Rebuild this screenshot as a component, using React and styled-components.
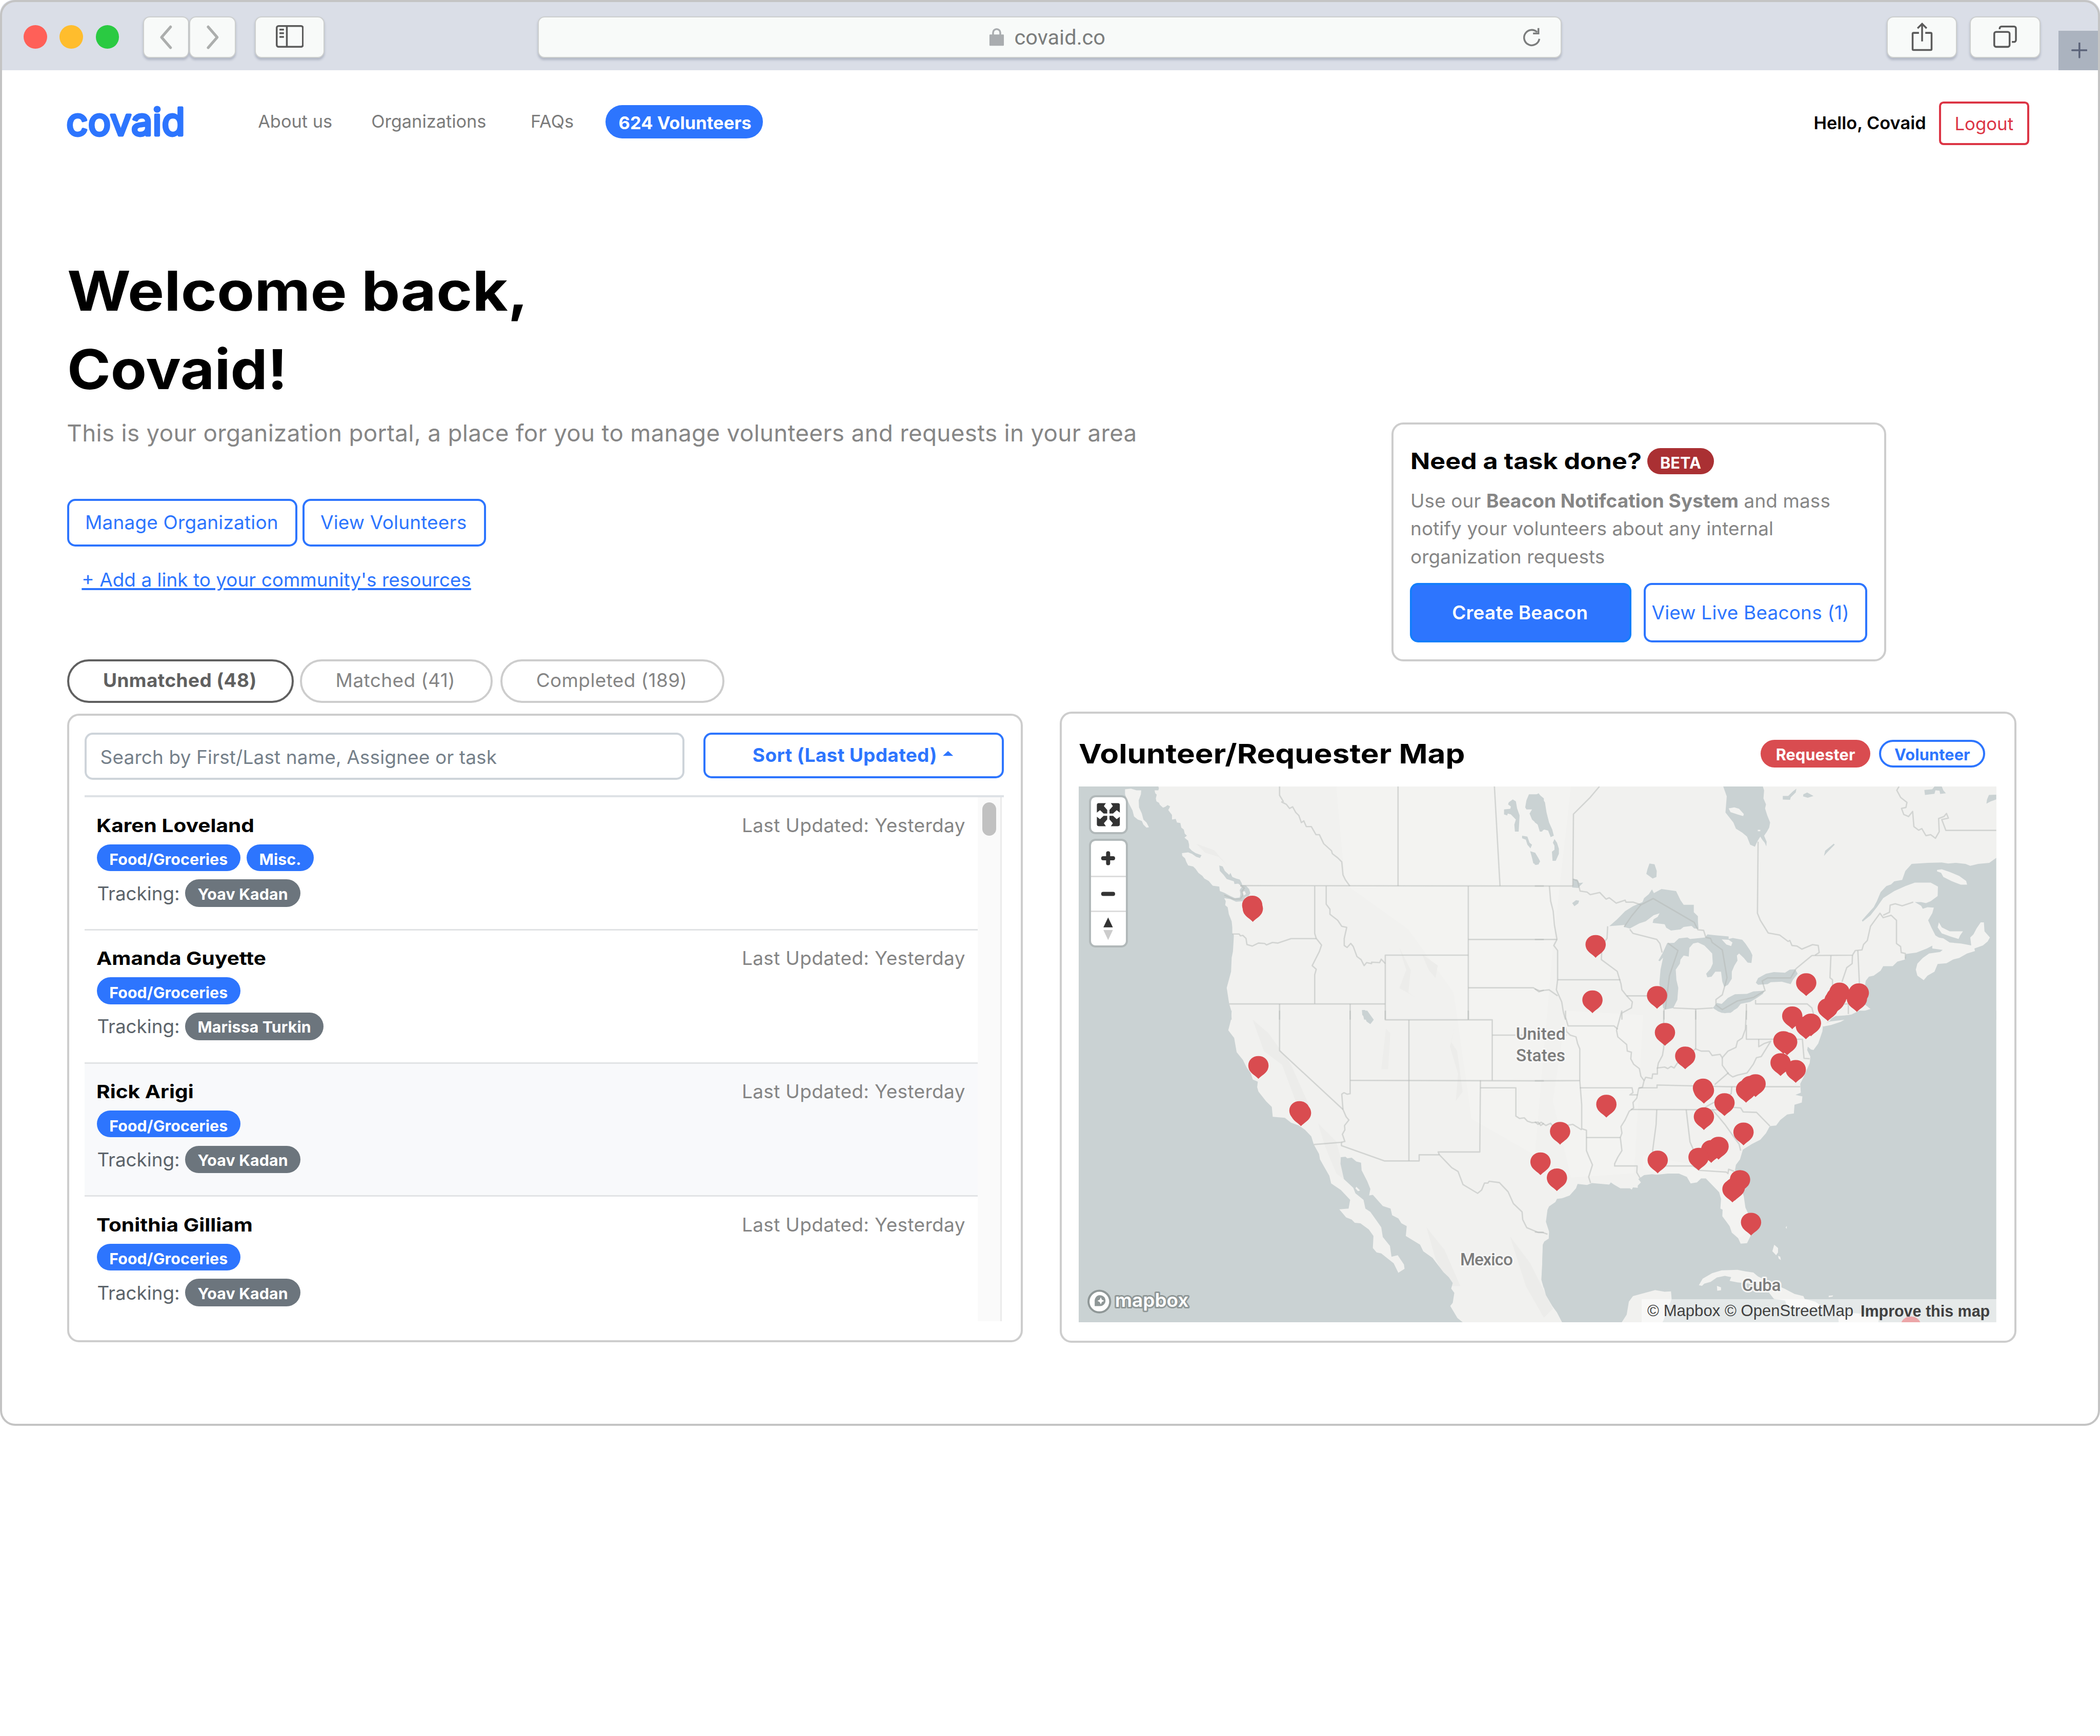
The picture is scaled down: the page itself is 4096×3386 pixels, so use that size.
import React from "react";
import styled, { createGlobalStyle, css } from "styled-components";

/* 1rem is one 46.52th of the window width, so the page scales with it. */
const GlobalStyle = createGlobalStyle`
  html { font-size: calc(100vw / 46.52); }
  body { margin: 0; background: #fff; font-family: Inter, "Liberation Sans", sans-serif; color: #000; overflow: hidden; }
  *, *::before, *::after { box-sizing: border-box; }
  h1, h2, h3, p { margin: 0; }
  button { font-family: inherit; margin: 0; padding: 0; background: none; border: 0; white-space: nowrap; }
`;

const BLUE = "#2d75fe";
const LINE = "#cdcdcd";

/* ---------- window ---------- */
const Window = styled.div`
  position: relative;
  height: 31.58rem;
  border-radius: 0.3rem;
  overflow: hidden;
  display: flex;
  flex-direction: column;
  &::after {
    content: "";
    position: absolute;
    inset: 0;
    border: 4px solid #c4c4c4;
    border-radius: 0.34rem;
    pointer-events: none;
  }
`;

const Toolbar = styled.div`
  flex: none;
  height: 1.56rem;
  padding: 0.36rem 0.04rem 0 0.52rem;
  background: #dadee7;
  display: flex;
  align-items: flex-start;
`;

const Lights = styled.div`
  display: flex;
  gap: 0.28rem;
  margin-top: 0.2rem;
`;
const Light = styled.span`
  width: 0.52rem;
  height: 0.52rem;
  border-radius: 50%;
  background: ${(p) => p.$color};
`;

const ToolButton = styled.button`
  flex: none;
  width: ${(p) => p.$width}rem;
  height: 0.92rem;
  margin-left: ${(p) => p.$before || 0}rem;
  border: 2px solid #cdcfce;
  border-radius: 0.15rem;
  background: #f8faf9;
  box-shadow: 0 0.04rem 0.05rem rgba(90, 100, 125, 0.32);
  display: flex;
  align-items: center;
  justify-content: center;
`;

const AddressBar = styled(ToolButton)`
  justify-content: flex-start;
  padding: 0 0.44rem 0 9.98rem;
`;
const Address = styled.span`
  font-family: Roboto, sans-serif;
  font-size: 0.472rem;
  color: #7b7d7d;
  margin: 0.01rem auto 0 0.22rem;
`;

const NewTab = styled.button`
  flex: none;
  width: 0.88rem;
  height: 0.88rem;
  margin: 0.32rem 0 0 0.4rem;
  padding-left: 0.04rem;
  background: #abb3bf;
  display: flex;
  align-items: center;
  justify-content: center;
`;

/* ---------- site header ---------- */
const Header = styled.header`
  flex: none;
  height: 2.44rem;
  padding: 0.69rem 1.57rem 0 1.5rem;
  display: flex;
  align-items: flex-start;
`;
const Logo = styled.svg`
  display: block;
  width: 2.6rem;
  height: 0.8rem;
  margin-top: 0.05rem;
  overflow: visible;
`;
const Nav = styled.nav`
  display: flex;
  align-items: flex-start;
  margin-left: 1.615rem;
`;
const NavLink = styled.a`
  width: ${(p) => p.$width}rem;
  margin-top: 0.195rem;
  font-size: 0.39rem;
  line-height: 0.5rem;
  color: #7b7b7b;
`;
const VolunteerCount = styled.span`
  width: 3.49rem;
  height: 0.737rem;
  margin-top: 0.08rem;
  padding: 0.05rem 0 0 0.03rem;
  border-radius: 0.37rem;
  background: ${BLUE};
  color: #fff;
  font-size: 0.392rem;
  font-weight: 700;
  display: flex;
  align-items: center;
  justify-content: center;
`;
const Account = styled.div`
  margin-left: auto;
  display: flex;
  align-items: flex-start;
`;
const Greeting = styled.span`
  margin-top: 0.225rem;
  font-size: 0.39rem;
  line-height: 0.5rem;
  font-weight: 600;
  margin-right: 0.285rem;
`;
const Logout = styled.button`
  width: 2rem;
  height: 0.967rem;
  border: 4px solid #dc3545;
  border-radius: 0.1rem;
  color: #dc3545;
  font-size: 0.395rem;
`;

/* ---------- page body ---------- */
const Main = styled.main`
  display: flex;
  gap: 0.82rem;
  padding-left: 1.49rem;
`;
const PortalColumn = styled.section`
  width: 21.166rem;
  padding-top: 1.58rem;
`;
const MapColumn = styled.section`
  width: 21.196rem;
  padding-top: 5.364rem;
`;

/* Headings are set wide: the letters are extended horizontally. */
const Wide = styled.span`
  display: ${(p) => (p.$line ? "block" : "inline-block")};
  transform: scaleX(${(p) => p.$stretch || 1.14});
  transform-origin: 0 50%;
  white-space: nowrap;
`;

const Welcome = styled.h1`
  font-size: 1.22rem;
  line-height: 1.74rem;
  font-weight: 700;
`;
const Intro = styled.p`
  margin-top: 0.214rem;
  margin-left: -0.01rem;
  font-size: 0.52rem;
  line-height: 0.64rem;
  letter-spacing: 0.0034rem;
  color: #868686;
  white-space: nowrap;
`;

const Actions = styled.div`
  display: flex;
  gap: 0.114rem;
  margin-top: 1.136rem;
`;
const OutlineButton = styled.button`
  width: ${(p) => p.$width}rem;
  height: ${(p) => p.$height || 1.055}rem;
  border: 4px solid ${BLUE};
  border-radius: 0.18rem;
  color: ${BLUE};
  font-size: 0.42rem;
  letter-spacing: 0.002rem;
  font-weight: ${(p) => (p.$bold ? 700 : 400)};
  padding: 0 ${(p) => p.$shift || 0.03}rem 0.015rem 0;
  display: flex;
  align-items: center;
  justify-content: center;
`;
const FilledButton = styled(OutlineButton)`
  background: ${BLUE};
  border-color: #147efb;
  color: #fff;
  font-weight: 600;
`;
const ResourceLink = styled.a`
  display: block;
  margin: 0.482rem 0 0 0.32rem;
  font-size: 0.42rem;
  line-height: 0.52rem;
  color: ${BLUE};
  text-decoration: underline;
  text-decoration-thickness: 3.5px;
  text-underline-offset: 0.035rem;
`;

const Tabs = styled.div`
  display: flex;
  margin-top: 1.505rem;
`;
const Tab = styled.button`
  width: ${(p) => p.$width}rem;
  height: 0.96rem;
  margin-right: ${(p) => p.$after || 0}rem;
  padding: 0 0.03rem 0.04rem 0;
  border-radius: 0.48rem;
  border: 4px solid ${(p) => (p.$active ? "#606060" : LINE)};
  color: ${(p) => (p.$active ? "#606060" : "#858585")};
  font-size: 0.42rem;
  letter-spacing: 0.0045rem;
  font-weight: ${(p) => (p.$active ? 700 : 400)};
`;

const Card = styled.div`
  border: 4px solid ${LINE};
  border-radius: 0.26rem;
  background: #fff;
`;

/* ---------- request list ---------- */
const ListCard = styled(Card)`
  height: 13.93rem;
  margin-top: 0.234rem;
  padding: 0.383rem 0.37rem 0 0.341rem;
  overflow: hidden;
`;
const Filters = styled.div`
  display: flex;
  gap: 0.425rem;
  height: 1.037rem;
`;
const Search = styled.div`
  width: 13.285rem;
  height: 1.037rem;
  padding: 0.035rem 0 0 0.3rem;
  border: 4px solid #ced4da;
  border-radius: 0.18rem;
  font-size: 0.42rem;
  letter-spacing: 0.0015rem;
  color: #75808a;
  display: flex;
  align-items: center;
`;
const SortButton = styled(OutlineButton)`
  gap: 0.13rem;
  letter-spacing: 0.004rem;
  padding-bottom: 0.03rem;
`;
const ListArea = styled.div`
  margin-top: 0.348rem;
  height: 11.655rem;
  width: 20.357rem;
  border-top: 4px solid #dee2e6;
  display: flex;
  overflow: hidden;
`;
const Rows = styled.div`
  width: 19.777rem;
`;
const Row = styled.div`
  height: 2.95rem;
  padding: 0.367rem 0.27rem 0 0.27rem;
  border-bottom: 3px solid #e1e3e5;
  background: ${(p) => (p.$hovered ? "#f8f9fb" : "#fff")};
`;
const RowHead = styled.div`
  display: flex;
  justify-content: space-between;
  line-height: 0.5rem;
`;
const Person = styled(Wide)`
  font-size: 0.405rem;
  font-weight: 700;
  margin-left: -0.01rem;
`;
const Updated = styled.span`
  font-size: 0.42rem;
  letter-spacing: 0.004rem;
  color: #858585;
`;
const Tags = styled.div`
  display: flex;
  gap: 0.145rem;
  margin-top: 0.17rem;
`;
const Tag = styled.span`
  height: ${(p) => (p.$muted ? 0.61 : 0.595)}rem;
  padding: ${(p) => (p.$muted ? 0.035 : 0.08)}rem 0.275rem 0 0.275rem;
  border-radius: 0.31rem;
  background: ${(p) => (p.$muted ? "#6c757d" : BLUE)};
  color: #fff;
  font-size: 0.345rem;
  letter-spacing: 0.001rem;
  font-weight: 700;
  display: flex;
  align-items: center;
`;
const Tracking = styled.div`
  display: flex;
  align-items: center;
  gap: 0.12rem;
  height: 0.62rem;
  margin: 0.18rem 0 0 0.005rem;
  font-size: 0.418rem;
  color: #5c646b;
`;
const ScrollTrack = styled.div`
  width: 0.54rem;
  background: #fafafa;
  border-right: 3px solid #ebebeb;
  padding: 0.11rem 0 0 0.11rem;
`;
const ScrollThumb = styled.div`
  width: 0.31rem;
  height: 0.74rem;
  border-radius: 0.155rem;
  background: #c1c1c1;
`;

/* ---------- beacon card ---------- */
const BeaconCard = styled(Card)`
  width: 10.96rem;
  height: 5.286rem;
  margin-left: 7.344rem;
  padding: 0.52rem 0 0 0.369rem;
`;
const BeaconTitle = styled.h3`
  display: flex;
  height: 0.58rem;
  margin-left: 0.01rem;
  font-size: 0.5rem;
  line-height: 0.58rem;
  font-weight: 700;
`;
const BeaconName = styled.span`
  width: 5.25rem;
`;
const Beta = styled.span`
  width: 1.47rem;
  height: 0.58rem;
  padding-top: 0.08rem;
  border-radius: 0.29rem;
  background: #aa3033;
  color: #fff;
  font-size: 0.35rem;
  font-weight: 700;
  line-height: 0.5rem;
  text-align: center;
`;
const BeaconText = styled.p`
  margin: 0.279rem 0 0 0.01rem;
  font-size: 0.42rem;
  line-height: 0.62rem;
  letter-spacing: 0.0008rem;
  color: #868686;
  white-space: nowrap;
`;
const BeaconActions = styled.div`
  display: flex;
  gap: 0.275rem;
  margin-top: 0.264rem;
`;

/* ---------- map card ---------- */
const MapCard = styled(Card)`
  height: 13.976rem;
  margin-top: 1.115rem;
  padding: 0.542rem 0 0 0.375rem;
`;
const MapHead = styled.div`
  display: flex;
  width: 20.324rem;
  height: 0.7rem;
  padding-right: 0.24rem;
`;
const MapTitle = styled.h2`
  font-size: 0.6rem;
  line-height: 0.7rem;
  font-weight: 700;
`;
const Legend = styled.div`
  margin: 0.033rem 0 0 auto;
  display: flex;
  gap: 0.194rem;
`;
const LegendPill = styled.span`
  width: ${(p) => p.$width}rem;
  height: 0.615rem;
  padding-top: 0.05rem;
  border-radius: 0.31rem;
  font-size: 0.348rem;
  letter-spacing: 0.002rem;
  font-weight: 700;
  display: flex;
  align-items: center;
  justify-content: center;
  ${(p) =>
    p.$filled
      ? css`background: #d94c50; color: #fff;`
      : css`border: 4px solid ${BLUE}; color: ${BLUE};`}
`;
const MapFrame = styled.div`
  position: relative;
  width: 20.324rem;
  height: 11.862rem;
  margin-top: 0.373rem;
  overflow: hidden;
  background: #f1f1ef;
`;
const MapDrawing = styled.svg`
  display: block;
  width: 100%;
  height: 100%;
`;
const MapControls = styled.div`
  position: absolute;
  top: 0.232rem;
  left: 0.269rem;
  display: flex;
  flex-direction: column;
  gap: 0.196rem;
`;
const ControlGroup = styled.div`
  width: 0.778rem;
  border-radius: 0.1rem;
  background: #fff;
  box-shadow: 0 0 0 0.045rem rgba(0, 0, 0, 0.12);
`;
const Control = styled.button`
  display: flex;
  align-items: center;
  justify-content: center;
  width: 100%;
  height: 0.772rem;
  & + & { border-top: 3px solid #ddd; }
`;
const ControlGlyph = styled.svg`
  display: block;
  flex: none;
  width: 0.778rem;
  height: 0.772rem;
`;
const Attribution = styled.div`
  position: absolute;
  right: 0;
  bottom: 0;
  height: 0.51rem;
  padding: 0.02rem 0.14rem 0 0.125rem;
  background: rgba(255, 255, 255, 0.5);
  font-family: "Liberation Sans", Arial, sans-serif;
  font-size: 0.353rem;
  color: #404040;
  display: flex;
  align-items: center;
  gap: 0.1rem;
`;
const Improve = styled.b`
  margin-left: 0.06rem;
  font-size: 0.346rem;
`;

/* ---------- icons ---------- */
const IconBox = styled.svg`
  display: block;
  flex: none;
  width: ${(p) => p.$w / 100}rem;
  height: ${(p) => p.$h / 100}rem;
`;
const Icon = ({ w, h, children, stroke = "#5a5a5a", sw = 4 }) => (
  <IconBox $w={w} $h={h} viewBox={`0 0 ${w} ${h}`} fill="none" stroke={stroke} strokeWidth={sw}>
    {children}
  </IconBox>
);

const BackIcon = () => (
  <Icon w={36} h={56} stroke="#acaead" sw={6}>
    <path d="M28 5 8 28 28 51" strokeLinecap="round" strokeLinejoin="round" />
  </Icon>
);
const ForwardIcon = () => (
  <Icon w={36} h={56} stroke="#acaead" sw={6}>
    <path d="M8 5 28 28 8 51" strokeLinecap="round" strokeLinejoin="round" />
  </Icon>
);
const SidebarIcon = () => (
  <Icon w={62} h={52}>
    <rect x="2" y="2" width="58" height="46" rx="4" />
    <path d="M24.400 2v46M8 10h10M8 18h10M8 26h10" />
  </Icon>
);
const LockIcon = () => (
  <Icon w={34} h={40} stroke="#a9acaf">
    <path d="M9 15V10a8 8 0 0 1 16 0v5" />
    <rect x="1" y="14" width="32" height="25" rx="1.500" fill="#a9acaf" stroke="none" />
  </Icon>
);
const ReloadIcon = () => (
  <Icon w={42} h={46} stroke="#7b7d7d">
    <path d="M38 27A17 17 0 1 1 33 12M36 3V15H24" />
  </Icon>
);
const ShareIcon = () => (
  <Icon w={50} h={66}>
    <path d="M18 24H6a2 2 0 0 0-2 2V60a2 2 0 0 0 2 2H44a2 2 0 0 0 2-2V26a2 2 0 0 0-2-2H32" />
    <path d="M25 43V4M15 14 25 4 35 14" />
  </Icon>
);
const CopiesIcon = () => (
  <Icon w={52} h={50}>
    <rect x="2" y="14" width="34" height="33" rx="4" />
    <path d="M14 8V6a4 4 0 0 1 4-4H46a4 4 0 0 1 4 4V32a4 4 0 0 1-4 4H41" />
  </Icon>
);
const PlusIcon = () => (
  <Icon w={36} h={36} stroke="#5b6379">
    <path d="M2 17H34M18 1V33" strokeLinecap="round" />
  </Icon>
);
const CaretIcon = () => (
  <Icon w={23} h={24} stroke="none">
    <path d="M0 14 11.500 3 23 14Z" fill={BLUE} />
  </Icon>
);

/* ---------- map data ---------- */
const water = {
  nw: [
    "72,411 328,411 330,420 328,430 316,430 318,444 323,452 320,470 322,485 330,492 333,502 343,516 350,512 358,503 366,510 360,528 366,540 372,552 372,575 384,572 388,590 399,592 402,615 410,625 413,645 420,655 412,665 424,680 427,700 427,715 436,730 448,742 467,752 462,766 450,760 436,745 424,738 404,742 405,755 414,768 418,785 424,803 440,808 448,820 457,840 470,855 476,868 490,880 503,903 524,908 526,930 540,938 560,955 575,965 590,962 592,945 590,925 597,908 585,893 573,895 571,882 548,870 538,850 526,830 524,803 535,808 542,830 556,850 560,840 566,860 578,868 590,873 596,890 598,900 610,903 620,920 624,940 618,955 608,960 600,980 578,983 560,970 540,965 545,980 543,1000 551,1010 555,1045 564,1080 566,1110 566,1140 571,1148 570,1180 568,1230 564,1260 562,1330 555,1370 548,1410 552,1450 556,1490 562,1520 564,1568 72,1568",
    "1455,490 1468,475 1478,485 1482,520 1490,555 1487,635 1475,635 1473,600 1478,575 1462,550 1452,545 1450,555 1440,550 1440,525 1460,522 1462,510 1453,500",
    "1508,515 1512,480 1520,450 1552,450 1568,470 1568,620 1562,635 1555,635 1548,600 1530,575 1522,545 1530,525 1512,525",
    "1498,655 1515,660 1522,690 1530,700 1525,718 1515,700 1510,675 1498,668",
    "1524,732 1540,740 1550,765 1556,785 1545,800 1534,792 1530,765",
    "983,1520 993,1520 998,1540 1010,1550 1020,1568 990,1568",
  ],
  ne: [
    "0,455 12,445 20,462 32,490 37,540 45,590 55,625 60,655 50,662 42,630 30,625 18,635 10,600 0,590",
    "62,672 70,690 76,720 76,745 66,780 56,780 54,735 62,725 62,705 57,690",
    "0,740 8,760 16,780 12,798 0,800",
    "595,411 720,411 724,430 722,470 730,500 727,520 734,555 743,590 740,615 733,635 724,655 732,685 731,708 726,690 718,675 712,660 704,680 700,692 695,710 680,700 670,660 655,640 635,620 627,590 602,540 606,460",
    "783,458 800,458 815,435 826,422 824,440 808,465 806,477 783,476",
    "848,450 860,441 880,458 862,467 847,460",
    "1230,428 1255,425 1262,411 1285,411 1290,430 1298,445 1280,448 1278,432 1265,430 1262,447 1232,453",
    "1434,453 1457,452 1457,475 1440,485 1426,496 1428,475",
    "944,695 947,700 925,735 913,756 917,730",
    "362,793 378,797 385,830 384,860 372,868 352,845 356,820",
    "120,870 134,872 140,890 153,888 142,905 138,915 118,912 120,895",
    "118,990 130,975 140,978 137,992 125,1005",
    "340,985 345,965 360,945 370,922 376,940 400,920 446,930 460,975 470,998 502,998 502,1035 515,1055 515,1080 517,1118 503,1115 495,1103 470,1108 460,1120 430,1126 415,1112 410,1095 372,1088 375,1070 388,1058 394,1040 375,1050 350,1080 330,1090 300,1116 282,1108 284,1098 235,1104 260,1070 285,1030 310,1005",
    "418,1188 440,1187 455,1165 482,1160 490,1168 538,1160 545,1145 575,1150 612,1155 612,1168 625,1163 655,1172 665,1190 680,1225 687,1248 684,1287 672,1285 660,1262 645,1240 638,1250 640,1275 630,1300 622,1330 622,1365 610,1395 598,1405 592,1380 588,1330 570,1330 558,1355 545,1358 541,1340 555,1315 562,1290 560,1240 548,1220 535,1200 515,1185 500,1190 488,1212 486,1255 470,1250 460,1270 458,1290 445,1320 447,1370 453,1410 450,1470 437,1510 412,1518 405,1510 400,1440 393,1390 397,1320 405,1260 415,1242 395,1278 390,1275 403,1240",
    "562,1510 575,1485 590,1490 610,1460 632,1442 670,1440 690,1428 725,1424 720,1440 700,1462 680,1480 650,1490 640,1510 620,1530 600,1536 580,1528",
    "698,1385 705,1362 730,1340 755,1332 790,1335 805,1320 822,1318 830,1340 815,1370 808,1392 780,1380 745,1382 735,1392 705,1395",
    "1457,765 1435,790 1400,795 1375,805 1360,795 1330,790 1305,793 1285,788 1240,790 1190,795 1170,830 1160,875 1135,882 1125,897 1110,905 1092,935 1080,980 1070,1010 1050,1045 1033,1075 1035,1082 1060,1050 1080,1010 1100,965 1135,930 1170,905 1200,888 1250,888 1273,908 1272,955 1250,980 1235,990 1220,985 1200,985 1220,1003 1225,1018 1240,1010 1260,1012 1255,1040 1242,1075 1252,1110 1265,1150 1280,1165 1262,1195 1238,1215 1205,1235 1172,1242 1168,1270 1145,1280 1130,1303 1100,1303 1092,1325 1070,1350 1055,1355 1045,1375 1042,1405 1050,1440 1040,1490 1060,1515 1040,1525 1020,1530 1000,1545 950,1550 930,1568 1457,1568",
  ],
  sw: [
    "72,0 564,0 562,40 553,90 572,125 580,190 600,225 612,260 625,285 632,315 648,325 646,350 650,370 675,415 693,440 696,485 735,490 755,512 780,525 800,545 820,575 828,612 845,655 848,680 860,710 878,755 884,790 915,820 945,865 940,905 910,908 932,945 950,955 960,970 978,972 1005,1000 1020,1030 1018,1085 1030,1105 1045,1110 1085,1155 1100,1198 1120,1180 1118,1160 1098,1118 1078,1125 1073,1075 1050,1035 1045,990 1030,960 1010,920 994,905 988,865 962,835 955,810 925,770 914,700 915,670 930,668 936,675 950,672 965,690 980,695 982,730 1000,780 1010,815 1006,845 1018,842 1050,893 1075,905 1080,935 1100,950 1110,972 1127,985 1124,1030 1170,1070 1180,1100 1210,1130 1245,1195 1262,1218 1275,1245 1270,1270 1280,1290 1275,1335 1267,1350 1290,1405 1312,1430 72,1430",
    "1568,1060 1565,1080 1562,1180 1560,1230 1568,1270",
    "983,0 1000,0 1010,20 1021,42 1010,62 998,50 992,30 984,20",
  ],
  se: [
    "1457,0 1025,0 1000,18 960,28 935,42 910,68 908,95 895,150 880,180 872,178 862,165 860,180 870,210 868,240 850,300 838,335 840,375 823,385 845,392 843,420 820,430 818,470 797,475 775,500 762,525 742,528 730,560 712,590 685,610 657,635 648,680 635,705 632,730 645,770 660,850 665,900 673,925 680,960 683,1025 670,1063 650,1065 642,1040 622,1015 615,985 605,965 592,940 593,910 586,905 588,860 582,830 562,800 540,767 525,767 512,785 492,790 480,760 455,745 420,745 385,750 370,748 345,752 327,770 335,785 325,800 325,810 310,808 306,818 300,812 270,812 250,795 240,785 235,795 180,788 165,797 135,792 130,812 110,845 85,858 70,860 65,875 45,895 40,910 35,965 45,1010 44,1042 30,1055 25,1070 22,1230 35,1300 55,1350 70,1380 88,1430 272,1430 290,1390 297,1330 310,1305 380,1277 410,1285 430,1283 432,1318 405,1420 400,1430 1457,1430",
    "575,0 628,0 618,10 590,10",
  ],
};
const islands = {
  nw: ["221,425 240,422 258,430 273,430 272,450 265,480 266,515 275,545 280,575 290,590 298,613 290,615 280,600 275,582 262,575 250,560 245,530 235,500 226,470 221,450", "598,935 606,930 610,945 602,952"],
  ne: [
    "612,520 630,515 645,522 660,548 658,558 640,550 618,538",
    "704,626 712,626 712,633 704,633",
    "590,1170 612,1172 624,1185 620,1203 605,1195",
    "1270,825 1285,822 1310,835 1340,855 1362,880 1365,898 1345,898 1315,880 1290,860 1283,840 1270,832",
    "1276,1085 1285,1110 1310,1130 1352,1130 1343,1150 1338,1168 1312,1155 1285,1140 1272,1110",
    "1262,1180 1275,1160 1290,1165 1310,1185 1345,1190 1378,1200 1375,1160 1385,1145 1395,1115 1408,1085 1418,1085 1420,1130 1437,1160 1430,1180 1415,1200 1388,1215 1390,1228 1365,1240 1340,1262 1320,1270 1300,1288 1272,1292 1262,1330 1240,1350 1228,1372 1208,1350 1203,1320 1208,1290 1225,1262 1245,1240 1280,1232 1288,1222 1255,1215 1255,1200",
  ],
  sw: ["965,805 977,822 970,825 962,812"],
  se: [
    "905,68 930,50 978,42 965,52 935,66 912,72",
    "518,1255 530,1225 560,1200 590,1187 640,1185 665,1192 690,1197 705,1215 740,1240 790,1272 820,1295 848,1305 852,1318 885,1330 905,1350 890,1360 830,1362 795,1345 790,1325 755,1318 740,1290 720,1265 690,1250 640,1242 615,1235 620,1218 600,1212 575,1220 555,1240 535,1248 528,1258",
    "575,1258 588,1265 588,1278 576,1280",
    "756,1070 768,1085 768,1105 762,1118 750,1100",
    "768,1120 775,1125 777,1140 770,1133",
    "792,990 796,985 795,998",
    "928,1303 942,1302 940,1307 928,1310",
    "958,1405 985,1380 1030,1385 1085,1405 1085,1430 960,1430",
  ],
};
const borders = {
  nw: [
    "718,411 718,455 730,485 725,488 740,500 750,520 760,512 770,540 780,555 788,590 796,582 804,610 820,610 835,650 846,650 860,695 885,730 888,745 905,765 918,785 922,850 930,875 944,905",
    "1099,411 1099,905", "1409,411 1427,905", "592,903 1568,905",
    "831,905 831,1140 836,1165 853,1198 846,1230 823,1300 836,1318 831,1345 831,1490",
    "868,905 868,995 880,1020 880,1045 905,1075 918,1105 934,1110 926,1165 926,1200 935,1210 947,1190 955,1205 967,1255 980,1270 990,1300 998,1285 1014,1290 1014,1283 1040,1285 1045,1268 1058,1290",
    "1058,1568 1058,1248 1325,1248", "1325,905 1325,1568", "1325,1170 1568,1170",
    "1325,1410 1535,1410 1552,1430 1568,1422", "556,1490 1058,1490", "718,1490 718,1568", "945,1490 945,1568",
    "566,1143 588,1143 592,1152 600,1150 610,1165 613,1195 630,1203 650,1188 670,1190 676,1197 695,1185 712,1188 755,1166 836,1166",
    "540,950 570,970 592,970 600,950 597,930 605,915 592,903",
  ],
  ne: [
    "204,411 175,465 122,548 120,905", "0,905 120,905",
    "120,870 135,880 143,930 165,935 175,948 205,937 225,970 235,963 257,990 285,975 288,985 310,985 335,998 374,967 503,1085 515,1122 533,1125 540,1160 555,1165 560,1185 592,1222 607,1360 592,1445 572,1468 572,1495 592,1518 640,1475 690,1458 727,1424 718,1376 735,1361 808,1361 825,1315 875,1250 1003,1248 1012,1225 1033,1222 1038,1195 1050,1175 1060,1105 1090,1040 1100,1062 1125,1050 1142,1075 1142,1190 1155,1205 1157,1235 1170,1240 1170,1265",
    "705,685 703,1040 712,1075 737,1138 773,1148 800,1180 805,1175 812,1200 828,1203 843,1218 877,1196 895,1200 898,1235 885,1248",
    "1150,411 1143,430 1155,465 1175,490 1172,515 1158,520 1165,550 1180,560 1193,535 1197,610 1212,628 1222,620 1235,655 1250,650 1265,668 1277,635 1275,570 1292,560 1300,545 1306,568 1285,575 1298,629 1457,629",
    "1100,1050 1120,1035 1122,1000 1138,993 1160,1003 1195,985",
    "46,905 50,980 58,1030 62,1100 70,1170 60,1200 72,1225 72,1370 68,1420 75,1445 85,1480 90,1530 97,1568",
    "0,1170 70,1170", "72,1370 270,1370", "0,1415 15,1425 45,1420 72,1450",
    "230,1105 228,1165 212,1200 210,1270 260,1328 272,1390 275,1420 290,1450 308,1480 305,1510 275,1535 275,1568",
    "300,1120 310,1140 385,1170 395,1190 402,1235", "290,1450 400,1450", "408,1515 408,1568",
    "437,1510 508,1515 562,1510", "508,1515 508,1568", "668,1490 668,1568",
    "697,1470 697,1490 860,1490 875,1510 880,1540", "935,1250 932,1360 940,1370 940,1400",
    "1003,1248 1002,1290 985,1310 970,1380", "1020,1225 1025,1390", "940,1490 1020,1490", "990,1495 990,1540",
    "282,1108 305,1055 335,998", "412,1518 425,1350 452,1225 420,1188",
  ],
  sw: [
    "718,0 718,183 922,452", "945,0 945,380 935,382 925,375 918,382 922,452 932,485 941,500 927,525 928,545 920,565 928,598 917,602",
    "828,612 917,602 917,617 1055,687 1167,687 1167,659 1232,659 1272,718 1292,735 1308,795 1355,835 1368,820 1377,788 1388,788 1392,780 1425,786 1453,828 1470,882 1498,920 1500,955 1513,992 1550,1014 1568,1014",
    "1134,42 1134,687", "945,319 1568,321", "1058,0 1058,42 1402,42 1402,319", "1325,0 1325,42", "1402,112 1568,112",
    "1364,319 1362,646 1228,646 1232,659",
    "1364,353 1478,353 1478,482 1490,493 1505,490 1515,505 1530,512 1550,510 1558,525 1568,515",
  ],
  se: [
    "97,0 97,30 105,70 250,70 262,85", "97,75 100,95 112,112 130,120 135,150 142,175 142,320 148,430 148,540 163,547 163,640 170,665 182,705 170,760 176,788",
    "0,321 142,320", "142,353 307,353 310,375 300,385 325,385",
    "275,0 258,90 262,120 290,155 292,185 305,190 303,220 312,245 330,265 335,300 345,320 340,350 328,355 322,400 310,420 312,445 298,460 285,500 272,530 275,560 270,580 275,640 262,670 252,700 252,710 323,710 322,740 332,765",
    "163,580 270,580", "407,0 407,170 403,205 390,240 387,265",
    "345,320 350,305 370,310 372,290 387,290 387,262 410,258 420,265 430,255 440,262 450,240 460,230 508,175 525,185 550,185 560,205 585,200 592,215 610,185 635,168 640,140 655,125 665,85 668,0",
    "508,0 508,175", "668,65 668,131 845,131 850,218 868,220",
    "707,131 707,165 725,150 745,140 715,210 700,215 690,245 670,285 640,295 625,303 612,290 592,250 592,215",
    "612,283 568,338", "328,353 386,353 386,340 610,348 838,348", "303,452 580,453",
    "385,453 383,520 372,640 377,710", "478,453 490,600 502,640 500,710 410,710", "500,710 520,730 605,738 610,745 612,725 630,735",
    "560,453 580,485 600,520 620,560 645,610 650,640", "580,453 610,440 650,445 658,463 700,465 742,527",
    "622,348 620,380 590,400 540,440 530,453", "0,508 10,520 20,510 35,525 50,515 55,525 80,530 120,520 148,545",
    "0,1012 25,1014 40,1022", "0,112 100,112",
  ],
};
const tiles = {
  nw: "translate(2340 1560) scale(0.68878 0.44643)",
  ne: "translate(3400 1560) scale(0.70153 0.44643)",
  sw: "translate(2340 2240) scale(0.68878 0.48469)",
  se: "translate(3400 2240) scale(0.70153 0.48469)",
};

/* Soft relief: lighter plains and darker ranges, in map coordinates. */
const relief = [
  ["2960,1743 3480,1743 3440,2100 3400,2560 3260,2480 3220,2200 3120,2060 2980,1960", "#f3f3f1"],
  ["3470,2240 3640,2250 3620,2600 3480,2610 3440,2440", "#f3f3f1"],
  ["3640,2560 3850,2600 3890,2720 3850,2745 3780,2640 3640,2590", "#f3f3f1"],
  ["2775,2260 2800,2330 2840,2360 2870,2440 2900,2450 2860,2360 2810,2290", "#ececea"],
  ["2650,1870 2690,1885 2720,1920 2700,1900 2670,1890", "#ececea"],
  ["3100,2100 3125,2150 3120,2200 3135,2210 3100,2190 3115,2150", "#ececea"],
  ["3150,2115 3185,2140 3180,2168 3165,2150", "#ececea"],
  ["3225,2265 3215,2310 3228,2330 3240,2420 3225,2440 3230,2380 3212,2320", "#ececea"],
  ["3070,2280 3060,2370 3075,2370 3080,2290", "#ededeb"],
  ["2920,2490 2960,2530 2985,2620 2960,2600 2935,2540", "#ededeb"],
  ["3160,2720 3200,2770 3235,2850 3210,2850 3180,2790", "#ececea"],
  ["3345,2740 3390,2800 3440,2900 3420,2920 3380,2850", "#ececea"],
];

const pins = [
  [2774, 2036], [2775.3, 2043.5], [2787.7, 2391.2], [2878.6, 2491], [2882, 2496], [3534.7, 2123],
  [3527.7, 2245.7], [3670.8, 2236], [4001.2, 2207.8], [4074.9, 2228.3], [4117.7, 2230], [4113.5, 2243],
  [4064, 2247], [4068, 2240], [4049, 2263.3], [3970.3, 2281.2], [4011.7, 2297], [4000.5, 2303.5],
  [3688.3, 2318], [3733.2, 2370], [3950.7, 2336], [3959, 2339], [3944.4, 2385], [3978, 2400],
  [3772.5, 2441], [3774.6, 2446], [3820.2, 2473.6], [3889, 2431.5], [3878, 2435], [3868, 2444],
  [3774.6, 2504.6], [3558.5, 2477], [3456, 2537], [3862.3, 2538.6], [3672.2, 2600.6], [3790.8, 2577.3],
  [3807, 2570], [3762.7, 2594.3], [3854.6, 2643.8], [3843, 2661], [3837.8, 2665], [3879, 2738.3],
  [3449, 2640], [3412.6, 2604.5], [4233, 2968],
];

const places = [
  [3413, 2304.5, "United", 110], [3413, 2352.5, "States", 109],
  [3293, 2804.7, "Mexico", 117], [3902, 2861, "Cuba", 86],
];

const VolunteerMap = () => (
  <MapDrawing viewBox="2389.600 1743.500 2032.400 1186.200" preserveAspectRatio="none">
    <rect x="2389" y="1743" width="2034" height="1188" fill="#f1f1ef" />
    {relief.map(([pts, color]) => (
      <polygon key={pts} points={pts} fill={color} />
    ))}
    {Object.keys(tiles).map((t) => (
      <g key={t} transform={tiles[t]}>
        {water[t].map((p) => <polygon key={p} points={p} fill="#cad2d3" />)}
        {islands[t].map((p) => <polygon key={p} points={p} fill="#f2f2f0" />)}
        {borders[t].map((p) => (
          <polyline key={p} points={p} fill="none" stroke="#b4b7b6" strokeOpacity="0.5" strokeWidth="2.600" strokeLinejoin="round" vectorEffect="non-scaling-stroke" />
        ))}
      </g>
    ))}
    {places.map(([x, y, name, w]) => (
      <text key={name} x={x} y={y} textLength={w} textAnchor="middle" fontFamily="Roboto, sans-serif" fontWeight="500" fontSize="38" fill="#7c7c7c" stroke="#f6f6f5" strokeWidth="7" strokeLinejoin="round" paintOrder="stroke">
        {name}
      </text>
    ))}
    {pins.map(([x, y], i) => (
      <path key={i} transform={`translate(${x} ${y})`} d="M0 0C-3-4-10-8-16-14A22.500 22.500 0 0 1-22.500-29C-22.500-42-12.500-50.500 0-50.500S22.500-42 22.500-29A22.500 22.500 0 0 1 16-14C10-8 3-4 0 0Z" fill="#d94c50" />
    ))}
    <circle cx="2435.300" cy="2884.600" r="24" fill="#fff" stroke="#8f9797" strokeWidth="4.500" />
    <path d="M2425 2894.500V2884A12 12 0 1 1 2436.500 2894.500Z" fill="#8f9797" />
    <path d="M2438.500 2875 2441 2880.500 2446 2883 2441 2885.500 2438.500 2891 2436 2885.500 2431 2883 2436 2880.500Z" fill="#fff" />
    <text x="2470" y="2896" textLength="163" fontFamily="Inter, sans-serif" fontWeight="600" fontSize="42" fill="#fff" stroke="#8f9797" strokeWidth="7" strokeLinejoin="round" paintOrder="stroke">
      mapbox
    </text>
  </MapDrawing>
);

const people = [
  { name: "Karen Loveland", tags: ["Food/Groceries", "Misc."], tracker: "Yoav Kadan" },
  { name: "Amanda Guyette", tags: ["Food/Groceries"], tracker: "Marissa Turkin" },
  { name: "Rick Arigi", tags: ["Food/Groceries"], tracker: "Yoav Kadan", hovered: true },
  { name: "Tonithia Gilliam", tags: ["Food/Groceries"], tracker: "Yoav Kadan" },
];

export default function App() {
  return (
    <>
      <GlobalStyle />
      <Window>
        <Toolbar>
          <Lights>
            <Light $color="#ff6058" />
            <Light $color="#ffbd2d" />
            <Light $color="#2aca42" />
          </Lights>
          <ToolButton $width={1.02} $before={0.53}><BackIcon /></ToolButton>
          <ToolButton $width={1.04}><ForwardIcon /></ToolButton>
          <ToolButton $width={1.54} $before={0.42}><SidebarIcon /></ToolButton>
          <AddressBar as="div" $width={22.69} $before={4.72}>
            <LockIcon />
            <Address>covaid.co</Address>
            <ReloadIcon />
          </AddressBar>
          <ToolButton $width={1.55} $before={7.2}><ShareIcon /></ToolButton>
          <ToolButton $width={1.56} $before={0.29}><CopiesIcon /></ToolButton>
          <NewTab><PlusIcon /></NewTab>
        </Toolbar>

        <Header>
          <Logo viewBox="0 0 260 80">
            <text x="-3" y="70" textLength="263" lengthAdjust="spacingAndGlyphs" fontFamily="Inter, sans-serif" fontWeight="400" fontSize="84" fill={BLUE} stroke={BLUE} strokeWidth="5.500" strokeLinejoin="round">covaid</text>
          </Logo>
          <Nav>
            <NavLink $width={2.51}>About us</NavLink>
            <NavLink $width={3.53}>Organizations</NavLink>
            <NavLink $width={1.66}>FAQs</NavLink>
            <VolunteerCount>624 Volunteers</VolunteerCount>
          </Nav>
          <Account>
            <Greeting>Hello, Covaid</Greeting>
            <Logout>Logout</Logout>
          </Account>
        </Header>

        <Main>
          <PortalColumn>
            <Welcome>
              <Wide $line $stretch={1.113}>Welcome back,</Wide>
              <Wide $line $stretch={1.068}>Covaid!</Wide>
            </Welcome>
            <Intro>This is your organization portal, a place for you to manage volunteers and requests in your area</Intro>
            <Actions>
              <OutlineButton $width={5.1}>Manage Organization</OutlineButton>
              <OutlineButton $width={4.06}>View Volunteers</OutlineButton>
            </Actions>
            <ResourceLink>+ Add a link to your community's resources</ResourceLink>
            <Tabs>
              <Tab $active $width={5.02} $after={0.13}>Unmatched (48)</Tab>
              <Tab $width={4.27} $after={0.17}>Matched (41)</Tab>
              <Tab $width={4.97}>Completed (189)</Tab>
            </Tabs>
            <ListCard>
              <Filters>
                <Search>Search by First/Last name, Assignee or task</Search>
                <SortButton $width={6.647} $height={1.005} $bold>
                  Sort (Last Updated)
                  <CaretIcon />
                </SortButton>
              </Filters>
              <ListArea>
                <Rows>
                  {people.map((p) => (
                    <Row key={p.name} $hovered={p.hovered}>
                      <RowHead>
                        <Person>{p.name}</Person>
                        <Updated>Last Updated: Yesterday</Updated>
                      </RowHead>
                      <Tags>
                        {p.tags.map((t) => <Tag key={t}>{t}</Tag>)}
                      </Tags>
                      <Tracking>
                        Tracking:
                        <Tag $muted>{p.tracker}</Tag>
                      </Tracking>
                    </Row>
                  ))}
                </Rows>
                <ScrollTrack><ScrollThumb /></ScrollTrack>
              </ListArea>
            </ListCard>
          </PortalColumn>

          <MapColumn>
            <BeaconCard>
              <BeaconTitle>
                <BeaconName><Wide>Need a task done?</Wide></BeaconName>
                <Beta>BETA</Beta>
              </BeaconTitle>
              <BeaconText>
                Use our <b>Beacon Notifcation System</b> and mass<br />
                notify your volunteers about any internal<br />
                organization requests
              </BeaconText>
              <BeaconActions>
                <FilledButton $width={4.905} $height={1.315}>Create Beacon</FilledButton>
                <OutlineButton $width={4.945} $height={1.315} $shift={0.22}>View Live Beacons (1)</OutlineButton>
              </BeaconActions>
            </BeaconCard>
            <MapCard>
              <MapHead>
                <MapTitle><Wide>Volunteer/Requester Map</Wide></MapTitle>
                <Legend>
                  <LegendPill $filled $width={2.436}>Requester</LegendPill>
                  <LegendPill $width={2.35}>Volunteer</LegendPill>
                </Legend>
              </MapHead>
              <MapFrame>
                <VolunteerMap />
                <MapControls>
                  <ControlGroup>
                    <Control>
                      <ControlGlyph viewBox="0 0 78 77" fill="#333">
                        <path d="M13 34V17Q13 13 17 13H33L28.500 19.500 36 28V36H28L20 28.500ZM64 34V17Q64 13 60 13H44L48.500 19.500 41 28V36H49L57 28.500ZM13 43V60Q13 64 17 64H33L28.500 57.500 36 49V41H28L20 48.500ZM64 43V60Q64 64 60 64H44L48.500 57.500 41 49V41H49L57 48.500Z" />
                      </ControlGlyph>
                    </Control>
                  </ControlGroup>
                  <ControlGroup>
                    <Control>
                      <ControlGlyph viewBox="0 0 78 77" stroke="#333" strokeWidth="9" strokeLinecap="round"><path d="M27 38.500H49M38 27.500V49.500" /></ControlGlyph>
                    </Control>
                    <Control>
                      <ControlGlyph viewBox="0 0 78 77" stroke="#333" strokeWidth="9" strokeLinecap="round"><path d="M27 39H49" /></ControlGlyph>
                    </Control>
                    <Control>
                      <ControlGlyph viewBox="0 0 78 77"><path d="M27.500 36 38 14 48.500 36Z" fill="#333" /><path d="M27.500 42 38 64 48.500 42Z" fill="#ccc" /></ControlGlyph>
                    </Control>
                  </ControlGroup>
                </MapControls>
                <Attribution>
                  <span>© Mapbox</span>
                  <span>© OpenStreetMap</span>
                  <Improve>Improve this map</Improve>
                </Attribution>
              </MapFrame>
            </MapCard>
          </MapColumn>
        </Main>
      </Window>
    </>
  );
}
